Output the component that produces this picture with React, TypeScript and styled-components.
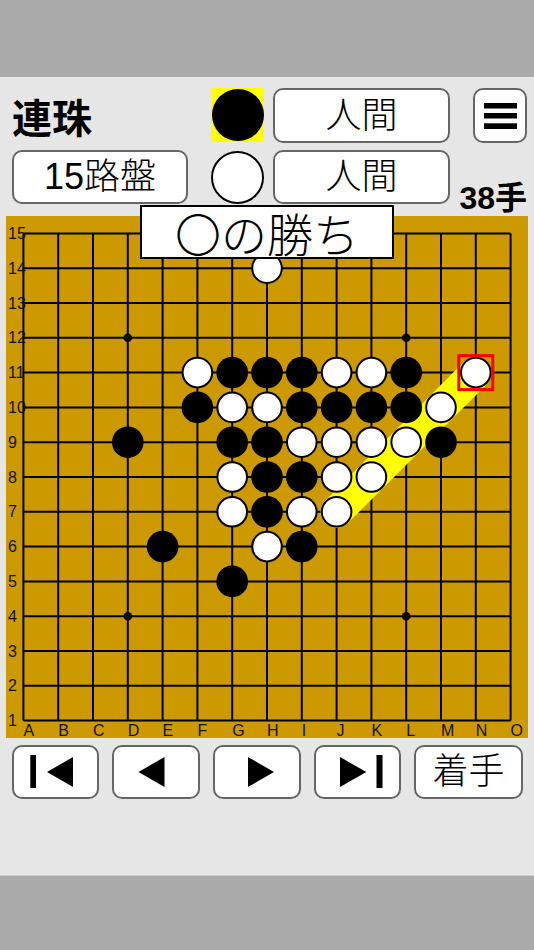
import styled, { createGlobalStyle } from "styled-components";

const GlobalStyle = createGlobalStyle`
  html, body {
    margin: 0;
    padding: 0;
    background: #aaaaaa;
  }
  body {
    font-family: "Liberation Sans", "Noto Sans CJK JP", sans-serif;
    color: #000;
  }
`;

const CELL = 34.8;
const OFF = CELL / 2;
const SIZE = CELL * 15;
const COLS = "ABCDEFGHIJKLMNO";

const BLACK = ["G11", "H11", "I11", "L11", "F10", "I10", "J10", "K10", "L10", "D9", "G9", "H9", "M9", "H8", "I8", "H7", "E6", "I6", "G5"];
const WHITE = ["H14", "F11", "J11", "K11", "N11", "G10", "H10", "M10", "I9", "J9", "K9", "L9", "G8", "J8", "K8", "G7", "I7", "J7", "H6"];
const STARS = ["D12", "L12", "H8", "D4", "L4"];

const pos = (p: string) => {
  const c = p.charCodeAt(0) - 65;
  const r = parseInt(p.slice(1), 10);
  return { x: OFF + c * CELL, y: OFF + (15 - r) * CELL };
};

const Page = styled.div`
  display: flex;
  flex-direction: column;
  height: 950px;
`;

const GrayBar = styled.div<{ $h: number; $top?: boolean }>`
  height: ${(p) => p.$h}px;
  background: #aaaaaa;
  border-top: ${(p) => (p.$top ? "1px solid #cfcfcf" : "none")};
  box-sizing: border-box;
`;

const Main = styled.div`
  flex: 1;
  background: #e6e6e6;
  padding-top: 11px;
`;

const Header = styled.div`
  display: grid;
  grid-template-columns: 199px 62px 200px 54px;
  grid-template-rows: 55px 54px;
  row-gap: 7px;
  padding-left: 12px;
`;

const Title = styled.div`
  font-family: "Noto Sans CJK JP", sans-serif;
  font-weight: 700;
  font-size: 40px;
  line-height: 1;
  align-self: center;
`;

const Button = styled.div<{ $w: number }>`
  width: ${(p) => p.$w}px;
  height: 100%;
  box-sizing: border-box;
  background: #fff;
  border: 2px solid #666;
  border-radius: 10px;
  display: flex;
  align-items: center;
  justify-content: center;
  font-size: 36px;
  font-weight: 300;
  line-height: 1;
`;

const StoneMark = styled.div<{ $black?: boolean }>`
  width: 53px;
  height: 54px;
  box-sizing: border-box;
  display: flex;
  align-items: center;
  justify-content: center;
  background: ${(p) => (p.$black ? "#ffff00" : "transparent")};

  &::after {
    content: "";
    width: ${(p) => (p.$black ? 52 : 53)}px;
    height: ${(p) => (p.$black ? 52 : 53)}px;
    box-sizing: border-box;
    border-radius: 50%;
    background: ${(p) => (p.$black ? "#000" : "#fff")};
    border: ${(p) => (p.$black ? "none" : "2px solid #000")};
  }
`;

const MoveCount = styled.div`
  justify-self: end;
  align-self: end;
  margin-bottom: -10px;
  font-weight: 700;
  font-size: 32px;
  line-height: 32px;
  white-space: nowrap;
`;

const BoardWrap = styled.div`
  position: relative;
  margin: 12px 0 0 6px;
  width: ${SIZE}px;
  height: ${SIZE}px;
  background: #cc9900;

  svg {
    display: block;
  }
`;

const Banner = styled.div`
  position: absolute;
  left: 134px;
  top: -11px;
  width: 254px;
  height: 54px;
  box-sizing: border-box;
  background: #fff;
  border: 2px solid #000;
  display: flex;
  align-items: center;
  justify-content: center;
  font-family: "Noto Sans CJK JP", sans-serif;
  font-size: 46px;
  font-weight: 300;
  line-height: 1;
`;

const Controls = styled.div`
  display: flex;
  gap: 13px;
  height: 54px;
  margin-top: 7px;
  padding-left: 12px;
`;

const Board = () => {
  const lines = [];
  for (let i = 0; i < 15; i++) {
    const p = OFF + i * CELL;
    lines.push(<line key={"h" + i} x1={OFF} y1={p} x2={SIZE - OFF} y2={p} />);
    lines.push(<line key={"v" + i} x1={p} y1={OFF} x2={p} y2={SIZE - OFF} />);
  }
  const a = pos("J7");
  const b = pos("N11");
  const last = pos("N11");
  return (
    <svg width={SIZE} height={SIZE} viewBox={`0 0 ${SIZE} ${SIZE}`}>
      <g stroke="#000" strokeWidth="2">{lines}</g>
      {STARS.map((s) => {
        const { x, y } = pos(s);
        return <circle key={s} cx={x} cy={y} r="4.3" fill="#000" />;
      })}
      <g fontFamily="Liberation Sans, sans-serif" fontSize="16" fill="#111">
        {Array.from({ length: 15 }, (_, i) => (
          <text key={"r" + i} x="2" y={OFF + (14 - i) * CELL} dominantBaseline="central">
            {i + 1}
          </text>
        ))}
        {COLS.split("").map((c, i) => (
          <text key={"c" + c} x={OFF + i * CELL} y={SIZE - 2.5}>
            {c}
          </text>
        ))}
      </g>
      <line x1={a.x} y1={a.y} x2={b.x} y2={b.y} stroke="#ffff00" strokeWidth="32" />
      <circle cx={a.x} cy={a.y} r="16" fill="#ffff00" />
      {BLACK.map((s) => {
        const { x, y } = pos(s);
        return <circle key={s} cx={x} cy={y} r="15.8" fill="#000" />;
      })}
      {WHITE.map((s) => {
        const { x, y } = pos(s);
        return <circle key={s} cx={x} cy={y} r="14.8" fill="#fff" stroke="#000" strokeWidth="2" />;
      })}
      <rect x={last.x - 17} y={last.y - 17} width="34" height="34" fill="none" stroke="#ff0000" strokeWidth="3" />
    </svg>
  );
};

type NavKind = "first" | "prev" | "next" | "last";

const NavIcon = ({ kind }: { kind: NavKind }) => (
  <svg width="60" height="34" viewBox="-30 -17 60 34">
    {kind === "first" && (
      <>
        <rect x="-25.7" y="-17" width="5.7" height="33" />
        <polygon points="-9,0 17,-15 17,15" />
      </>
    )}
    {kind === "prev" && <polygon points="-17.5,0 8.5,-15 8.5,15" />}
    {kind === "next" && <polygon points="-9,-15 -9,15 17,0" />}
    {kind === "last" && (
      <>
        <polygon points="-18,-15 -18,15 8.3,0" />
        <rect x="18.5" y="-17" width="6" height="33" />
      </>
    )}
  </svg>
);

const MenuIcon = () => (
  <svg width="33" height="26" viewBox="0 0 33 26">
    <rect x="0" y="0" width="33" height="5.5" />
    <rect x="0" y="10" width="33" height="5.5" />
    <rect x="0" y="20.3" width="33" height="5.7" />
  </svg>
);

export default function App() {
  return (
    <>
      <GlobalStyle />
      <Page>
        <GrayBar $h={77} />
        <Main>
          <Header>
            <Title>連珠</Title>
            <StoneMark $black />
            <Button $w={177}>人間</Button>
            <Button $w={54}>
              <MenuIcon />
            </Button>
            <Button $w={176}>15路盤</Button>
            <StoneMark />
            <Button $w={177}>人間</Button>
            <MoveCount>38手</MoveCount>
          </Header>
          <BoardWrap>
            <Board />
            <Banner>〇の勝ち</Banner>
          </BoardWrap>
          <Controls>
            <Button $w={87}>
              <NavIcon kind="first" />
            </Button>
            <Button $w={88}>
              <NavIcon kind="prev" />
            </Button>
            <Button $w={88}>
              <NavIcon kind="next" />
            </Button>
            <Button $w={87}>
              <NavIcon kind="last" />
            </Button>
            <Button $w={109}>着手</Button>
          </Controls>
        </Main>
        <GrayBar $h={75} $top />
      </Page>
    </>
  );
}
